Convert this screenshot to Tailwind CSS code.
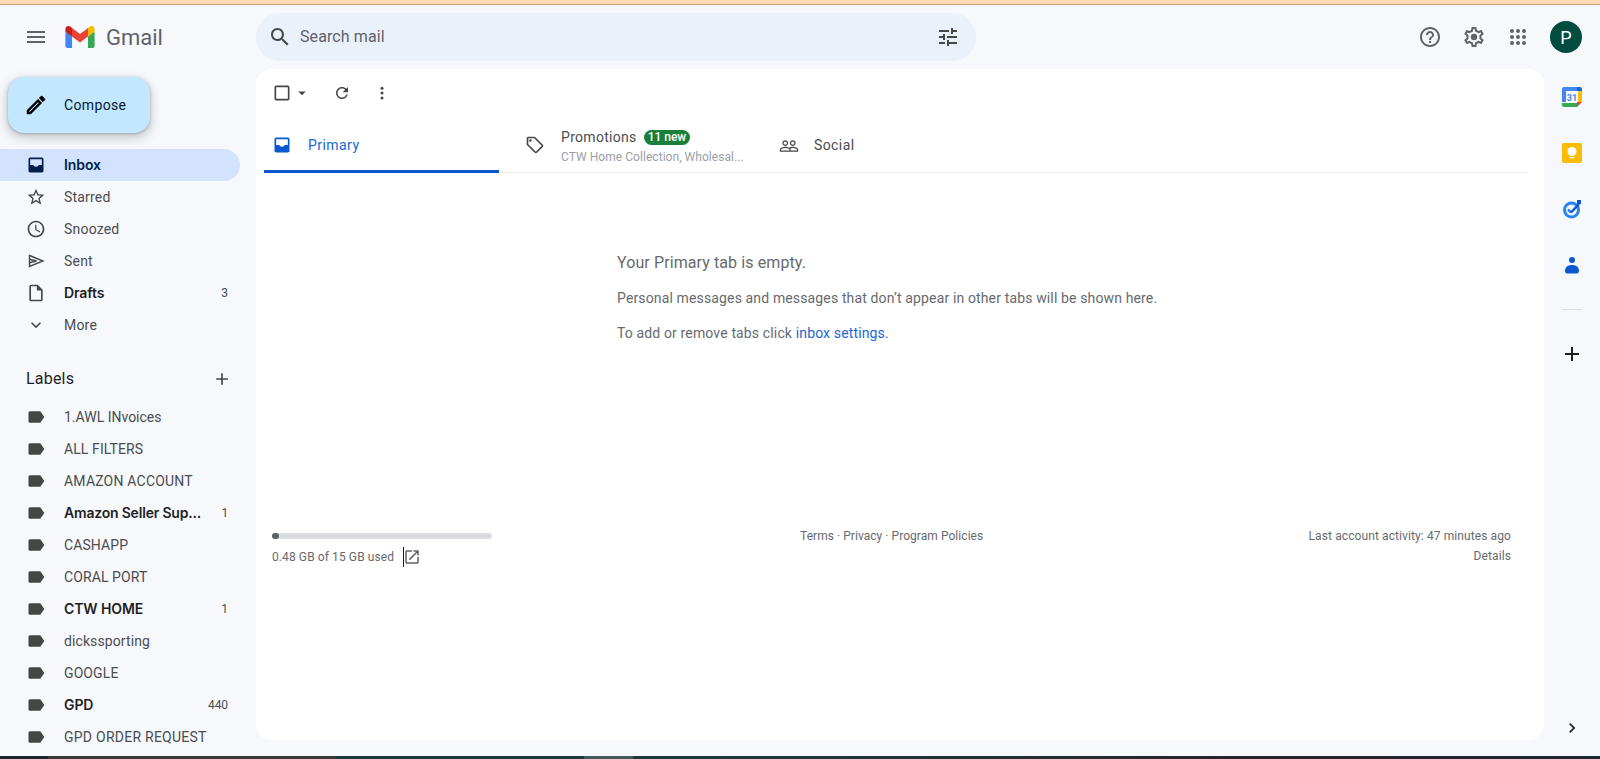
<!DOCTYPE html>
<html lang="en">
<head>
<meta charset="utf-8">
<title>Gmail</title>
<script src="https://cdn.jsdelivr.net/npm/@tailwindcss/browser@4"></script>
</head>
<body class="m-0 h-[759px] w-[1600px] overflow-hidden bg-[#f6f8fc] font-['Roboto',sans-serif] text-[14px] tracking-[0.1px] text-[#4a4d4f]">
<div class="flex h-[759px] flex-col">
  <div class="h-[5px] shrink-0 border-b border-[#c9a27c] bg-[#fdd9b5]"></div>

  <header class="flex h-[64px] shrink-0 items-center">
    <div class="flex w-[256px] shrink-0 items-center">
      <svg class="ml-[24px] h-6 w-6 fill-[#5f6368]" viewBox="0 0 24 24"><path d="M3 18h18v-2H3v2zm0-5h18v-2H3v2zm0-7v2h18V6H3z"/></svg>
      <svg class="ml-[17px] h-[22px] w-[30px]" viewBox="0 0 256 193"><path fill="#4285F4" d="M58.182 192.05V93.14L27.507 65.077 0 49.504v125.091c0 9.658 7.825 17.455 17.455 17.455h40.727z"/><path fill="#34A853" d="M197.818 192.05h40.727c9.659 0 17.455-7.826 17.455-17.455V49.505l-31.156 17.837-27.026 25.798v98.91z"/><path fill="#EA4335" d="M58.182 93.14l-4.174-38.647 4.174-36.989L128 69.868l69.818-52.364 4.669 34.992-4.669 40.644L128 145.504z"/><path fill="#FBBC04" d="M197.818 17.504V93.14L256 49.504V26.231c0-21.585-24.64-33.89-41.89-20.945l-16.292 12.218z"/><path fill="#C5221F" d="M0 49.504l26.759 20.07L58.182 93.14V17.504L41.89 5.286C24.61-7.66 0 4.646 0 26.23v23.273z"/></svg>
      <span class="ml-[11px] mt-[1px] text-[22px] leading-none tracking-normal text-[#5f6368]">Gmail</span>
    </div>
    <div class="flex h-[48px] w-[720px] items-center rounded-full bg-[#eaf1fb] pl-[12px] pr-[16px]">
      <svg class="h-6 w-6 fill-[#444746]" viewBox="0 0 24 24"><path d="M15.5 14h-.79l-.28-.27C15.41 12.59 16 11.11 16 9.5 16 5.91 13.09 3 9.5 3S3 5.91 3 9.5 5.91 16 9.5 16c1.61 0 3.09-.59 4.23-1.57l.27.28v.79l5 4.99L20.49 19l-4.99-5zm-6 0C7.01 14 5 11.99 5 9.5S7.01 5 9.5 5 14 7.01 14 9.5 11.99 14 9.5 14z"/></svg>
      <span class="ml-[8px] text-[16px] text-[#5f6368]">Search mail</span>
      <svg class="ml-auto h-6 w-6 fill-[#444746]" viewBox="0 0 24 24"><path d="M3 17v2h6v-2H3zM3 5v2h10V5H3zm10 16v-2h8v-2h-8v-2h-2v6h2zM7 9v2H3v2h4v2h2V9H7zm14 4v-2H11v2h10zm-6-4h2V7h4V5h-4V3h-2v6z"/></svg>
    </div>
    <div class="ml-auto flex items-center pr-[18px]">
      <svg class="h-6 w-6 fill-[#5f6368]" viewBox="0 0 24 24"><path d="M11 18h2v-2h-2v2zm1-16C6.48 2 2 6.48 2 12s4.48 10 10 10 10-4.48 10-10S17.52 2 12 2zm0 18c-4.41 0-8-3.59-8-8s3.59-8 8-8 8 3.59 8 8-3.59 8-8 8zm0-14c-2.21 0-4 1.79-4 4h2c0-1.1.9-2 2-2s2 .9 2 2c0 2-3 1.75-3 5h2c0-2.25 3-2.5 3-5 0-2.21-1.79-4-4-4z"/></svg>
      <svg class="ml-[20px] h-6 w-6 fill-[#5f6368]" viewBox="0 0 24 24"><path d="M19.43 12.98c.04-.32.07-.64.07-.98 0-.34-.03-.66-.07-.98l2.11-1.65c.19-.15.24-.42.12-.64l-2-3.46c-.09-.16-.26-.25-.44-.25-.06 0-.12.01-.17.03l-2.49 1c-.52-.4-1.08-.73-1.69-.98l-.38-2.65C14.46 2.18 14.25 2 14 2h-4c-.25 0-.46.18-.49.42l-.38 2.65c-.61.25-1.17.59-1.69.98l-2.49-1c-.06-.02-.12-.03-.18-.03-.17 0-.34.09-.43.25l-2 3.46c-.13.22-.07.49.12.64l2.11 1.65c-.04.32-.07.65-.07.98 0 .33.03.66.07.98l-2.11 1.65c-.19.15-.24.42-.12.64l2 3.46c.09.16.26.25.44.25.06 0 .12-.01.17-.03l2.49-1c.52.4 1.08.73 1.69.98l.38 2.65c.03.24.24.42.49.42h4c.25 0 .46-.18.49-.42l.38-2.65c.61-.25 1.17-.59 1.69-.98l2.49 1c.06.02.12.03.18.03.17 0 .34-.09.43-.25l2-3.46c.12-.22.07-.49-.12-.64l-2.11-1.65zm-1.98-1.71c.04.31.05.52.05.73 0 .21-.02.43-.05.73l-.14 1.13.89.7 1.08.84-.7 1.21-1.27-.51-1.04-.42-.9.68c-.43.32-.84.56-1.25.73l-1.06.43-.16 1.13-.2 1.35h-1.4l-.19-1.35-.16-1.13-1.06-.43c-.43-.18-.83-.41-1.23-.71l-.91-.7-1.06.43-1.27.51-.7-1.21 1.08-.84.89-.7-.14-1.13c-.03-.31-.05-.54-.05-.74s.02-.43.05-.73l.14-1.13-.89-.7-1.08-.84.7-1.21 1.27.51 1.04.42.9-.68c.43-.32.84-.56 1.25-.73l1.06-.43.16-1.13.2-1.35h1.39l.19 1.35.16 1.13 1.06.43c.43.18.83.41 1.23.71l.91.7 1.06-.43 1.27-.51.7 1.21-1.07.85-.89.7.14 1.13z"/><circle cx="12" cy="12" r="3.2"/></svg>
      <svg class="ml-[20px] h-6 w-6 fill-[#5f6368]" viewBox="0 0 24 24"><circle cx="6" cy="6" r="2"/><circle cx="12" cy="6" r="2"/><circle cx="18" cy="6" r="2"/><circle cx="6" cy="12" r="2"/><circle cx="12" cy="12" r="2"/><circle cx="18" cy="12" r="2"/><circle cx="6" cy="18" r="2"/><circle cx="12" cy="18" r="2"/><circle cx="18" cy="18" r="2"/></svg>
      <div class="ml-[20px] flex h-8 w-8 items-center justify-center rounded-full bg-[#004d40] text-[18px] text-white">P</div>
    </div>
  </header>

  <div class="flex min-h-0 flex-1">
    <aside class="w-[256px] shrink-0 overflow-hidden pt-[8px]">
      <div class="ml-[8px] flex h-[56px] w-[142px] items-center rounded-2xl bg-[#c2e7ff] pl-[16px] text-[#001d35] shadow-[0_1px_3px_rgba(60,64,67,0.35),0_4px_8px_3px_rgba(60,64,67,0.18)]">
        <svg class="h-6 w-6 fill-black stroke-black stroke-[0.5]" viewBox="0 0 24 24"><path d="M3 17.25V21h3.75L17.81 9.94l-3.75-3.75L3 17.25zM5.92 19H5v-.92l9.06-9.06.92.92L5.92 19zM20.71 5.63l-2.34-2.34c-.2-.2-.45-.29-.71-.29s-.51.1-.7.29l-1.83 1.83 3.75 3.75 1.83-1.83c.39-.39.39-1.02 0-1.41z"/></svg>
        <span class="ml-[16px] tracking-[0.35px]">Compose</span>
      </div>

      <nav class="mt-[16px] w-[240px]">
        <div class="flex h-8 items-center rounded-r-full bg-[#d3e3fd] pl-[26px] pr-[12px] font-['Inter'] font-semibold tracking-[-0.1px] text-[#041e49]">
          <svg class="h-5 w-5 fill-[#041e49]" viewBox="0 0 24 24"><path d="M19 3H5c-1.1 0-2 .9-2 2v14c0 1.1.9 2 2 2h14c1.1 0 2-.9 2-2V5c0-1.1-.9-2-2-2zm0 9h-4c0 1.66-1.34 2-3 2s-3-.34-3-2H5V5h14v7z"/></svg>
          <span class="ml-[18px] pb-[2px]">Inbox</span>
        </div>
        <div class="flex h-8 items-center pl-[26px] pr-[12px]">
          <svg class="h-5 w-5 fill-[#444746]" viewBox="0 0 24 24"><path d="M22 9.24l-7.19-.62L12 2 9.19 8.63 2 9.24l5.46 4.73L5.82 21 12 17.27 18.18 21l-1.63-7.03L22 9.24zM12 15.4l-3.76 2.27 1-4.28-3.32-2.88 4.38-.38L12 6.1l1.71 4.04 4.38.38-3.32 2.88 1 4.28L12 15.4z"/></svg>
          <span class="ml-[18px] tracking-[0.2px]">Starred</span>
        </div>
        <div class="flex h-8 items-center pl-[26px] pr-[12px]">
          <svg class="h-5 w-5 fill-[#444746]" viewBox="0 0 24 24"><path d="M11.99 2C6.47 2 2 6.48 2 12s4.47 10 9.99 10C17.52 22 22 17.52 22 12S17.52 2 11.99 2zM12 20c-4.42 0-8-3.58-8-8s3.58-8 8-8 8 3.58 8 8-3.58 8-8 8zm.5-13H11v6l5.25 3.15.75-1.23-4.5-2.67z"/></svg>
          <span class="ml-[18px] tracking-[0.2px]">Snoozed</span>
        </div>
        <div class="flex h-8 items-center pl-[26px] pr-[12px]">
          <svg class="h-5 w-5 fill-none stroke-[#444746] stroke-[1.4]" viewBox="0 0 20 20"><path d="M3.500 4.500L17 10 3.500 15.500z"/><path d="M3.500 8.300L10.500 10 3.500 11.700"/></svg>
          <span class="ml-[18px] tracking-[0.2px]">Sent</span>
        </div>
        <div class="flex h-8 items-center pl-[26px] pr-[12px] font-['Inter'] font-semibold tracking-[-0.1px] text-[#1f1f1f]">
          <svg class="h-5 w-5 fill-[#444746]" viewBox="0 0 24 24"><path d="M14 2H6c-1.1 0-1.99.9-1.99 2L4 20c0 1.1.89 2 1.99 2H18c1.1 0 2-.9 2-2V8l-6-6zM6 20V4h7v5h5v11H6z"/></svg>
          <span class="ml-[18px] pb-[2px]">Drafts</span>
          <span class="ml-auto font-['Roboto'] text-[12px] font-normal text-[#4a4d4f]">3</span>
        </div>
        <div class="flex h-8 items-center pl-[26px] pr-[12px]">
          <svg class="h-5 w-5 fill-[#444746]" viewBox="0 0 24 24"><path d="M7.41 8.59L12 13.17l4.59-4.58L18 10l-6 6-6-6 1.41-1.41z"/></svg>
          <span class="ml-[18px] tracking-[0.2px]">More</span>
        </div>

        <div class="mt-[22px] flex h-8 items-center pl-[26px] pr-[8px] text-[16px] text-[#1f1f1f]">
          <span class="tracking-[0.2px]">Labels</span>
          <svg class="ml-auto h-5 w-5 fill-[#444746]" viewBox="0 0 24 24"><path d="M19 13h-6v6h-2v-6H5v-2h6V5h2v6h6v2z"/></svg>
        </div>

        <div class="mt-[6px]">
          <div class="flex h-8 items-center pl-[26px] pr-[12px]">
            <svg class="h-5 w-5 fill-[#444746]" viewBox="0 0 24 24"><path d="M17.63 5.84C17.27 5.33 16.67 5 16 5L5 5.01C3.9 5.01 3 5.9 3 7v10c0 1.1.9 1.99 2 1.99L16 19c.67 0 1.27-.33 1.63-.84L22 12l-4.37-6.16z"/></svg>
            <span class="ml-[18px] tracking-normal">1.AWL INvoices</span>
          </div>
          <div class="flex h-8 items-center pl-[26px] pr-[12px]">
            <svg class="h-5 w-5 fill-[#444746]" viewBox="0 0 24 24"><path d="M17.63 5.84C17.27 5.33 16.67 5 16 5L5 5.01C3.9 5.01 3 5.9 3 7v10c0 1.1.9 1.99 2 1.99L16 19c.67 0 1.27-.33 1.63-.84L22 12l-4.37-6.16z"/></svg>
            <span class="ml-[18px]">ALL FILTERS</span>
          </div>
          <div class="flex h-8 items-center pl-[26px] pr-[12px]">
            <svg class="h-5 w-5 fill-[#444746]" viewBox="0 0 24 24"><path d="M17.63 5.84C17.27 5.33 16.67 5 16 5L5 5.01C3.9 5.01 3 5.9 3 7v10c0 1.1.9 1.99 2 1.99L16 19c.67 0 1.27-.33 1.63-.84L22 12l-4.37-6.16z"/></svg>
            <span class="ml-[18px] tracking-[0.2px]">AMAZON ACCOUNT</span>
          </div>
          <div class="flex h-8 items-center pl-[26px] pr-[12px] font-['Inter'] font-semibold tracking-[-0.2px] text-[#1f1f1f]">
            <svg class="h-5 w-5 fill-[#444746]" viewBox="0 0 24 24"><path d="M17.63 5.84C17.27 5.33 16.67 5 16 5L5 5.01C3.9 5.01 3 5.9 3 7v10c0 1.1.9 1.99 2 1.99L16 19c.67 0 1.27-.33 1.63-.84L22 12l-4.37-6.16z"/></svg>
            <span class="ml-[18px] pb-[2px]">Amazon Seller Sup...</span>
            <span class="ml-auto font-['Roboto'] text-[12px] font-normal text-[#4a4d4f]">1</span>
          </div>
          <div class="flex h-8 items-center pl-[26px] pr-[12px]">
            <svg class="h-5 w-5 fill-[#444746]" viewBox="0 0 24 24"><path d="M17.63 5.84C17.27 5.33 16.67 5 16 5L5 5.01C3.9 5.01 3 5.9 3 7v10c0 1.1.9 1.99 2 1.99L16 19c.67 0 1.27-.33 1.63-.84L22 12l-4.37-6.16z"/></svg>
            <span class="ml-[18px]">CASHAPP</span>
          </div>
          <div class="flex h-8 items-center pl-[26px] pr-[12px]">
            <svg class="h-5 w-5 fill-[#444746]" viewBox="0 0 24 24"><path d="M17.63 5.84C17.27 5.33 16.67 5 16 5L5 5.01C3.9 5.01 3 5.9 3 7v10c0 1.1.9 1.99 2 1.99L16 19c.67 0 1.27-.33 1.63-.84L22 12l-4.37-6.16z"/></svg>
            <span class="ml-[18px]">CORAL PORT</span>
          </div>
          <div class="flex h-8 items-center pl-[26px] pr-[12px] font-['Inter'] font-semibold tracking-[-0.1px] text-[#1f1f1f]">
            <svg class="h-5 w-5 fill-[#444746]" viewBox="0 0 24 24"><path d="M17.63 5.84C17.27 5.33 16.67 5 16 5L5 5.01C3.9 5.01 3 5.9 3 7v10c0 1.1.9 1.99 2 1.99L16 19c.67 0 1.27-.33 1.63-.84L22 12l-4.37-6.16z"/></svg>
            <span class="ml-[18px] pb-[2px]">CTW HOME</span>
            <span class="ml-auto font-['Roboto'] text-[12px] font-normal text-[#4a4d4f]">1</span>
          </div>
          <div class="flex h-8 items-center pl-[26px] pr-[12px]">
            <svg class="h-5 w-5 fill-[#444746]" viewBox="0 0 24 24"><path d="M17.63 5.84C17.27 5.33 16.67 5 16 5L5 5.01C3.9 5.01 3 5.9 3 7v10c0 1.1.9 1.99 2 1.99L16 19c.67 0 1.27-.33 1.63-.84L22 12l-4.37-6.16z"/></svg>
            <span class="ml-[18px]">dickssporting</span>
          </div>
          <div class="flex h-8 items-center pl-[26px] pr-[12px]">
            <svg class="h-5 w-5 fill-[#444746]" viewBox="0 0 24 24"><path d="M17.63 5.84C17.27 5.33 16.67 5 16 5L5 5.01C3.9 5.01 3 5.9 3 7v10c0 1.1.9 1.99 2 1.99L16 19c.67 0 1.27-.33 1.63-.84L22 12l-4.37-6.16z"/></svg>
            <span class="ml-[18px]">GOOGLE</span>
          </div>
          <div class="flex h-8 items-center pl-[26px] pr-[12px] font-['Inter'] font-semibold tracking-[-0.1px] text-[#1f1f1f]">
            <svg class="h-5 w-5 fill-[#444746]" viewBox="0 0 24 24"><path d="M17.63 5.84C17.27 5.33 16.67 5 16 5L5 5.01C3.9 5.01 3 5.9 3 7v10c0 1.1.9 1.99 2 1.99L16 19c.67 0 1.27-.33 1.63-.84L22 12l-4.37-6.16z"/></svg>
            <span class="ml-[18px] pb-[2px]">GPD</span>
            <span class="ml-auto font-['Roboto'] text-[12px] font-normal text-[#4a4d4f]">440</span>
          </div>
          <div class="flex h-8 items-center pl-[26px] pr-[12px]">
            <svg class="h-5 w-5 fill-[#444746]" viewBox="0 0 24 24"><path d="M17.63 5.84C17.27 5.33 16.67 5 16 5L5 5.01C3.9 5.01 3 5.9 3 7v10c0 1.1.9 1.99 2 1.99L16 19c.67 0 1.27-.33 1.63-.84L22 12l-4.37-6.16z"/></svg>
            <span class="ml-[18px] tracking-[0.25px]">GPD ORDER REQUEST</span>
          </div>
        </div>
      </nav>
    </aside>

    <main class="mb-[16px] min-w-0 flex-1 rounded-2xl bg-white">
      <div class="flex h-[48px] items-center pl-[16px]">
        <svg class="h-5 w-5 fill-[#444746]" viewBox="0 0 24 24"><path d="M19 5v14H5V5h14m0-2H5c-1.1 0-2 .9-2 2v14c0 1.1.9 2 2 2h14c1.1 0 2-.9 2-2V5c0-1.1-.9-2-2-2z"/></svg>
        <svg class="ml-[1px] h-[18px] w-[18px] fill-[#444746]" viewBox="0 0 24 24"><path d="M7 10l5 5 5-5z"/></svg>
        <svg class="ml-[22px] h-[18px] w-[18px] fill-[#444746]" viewBox="0 0 24 24"><path d="M17.65 6.35C16.2 4.9 14.21 4 12 4c-4.42 0-7.99 3.58-7.99 8s3.57 8 7.99 8c3.73 0 6.84-2.55 7.73-6h-2.08c-.82 2.33-3.04 4-5.65 4-3.31 0-6-2.69-6-6s2.69-6 6-6c1.66 0 3.14.69 4.22 1.78L13 11h7V4l-2.35 2.35z"/></svg>
        <svg class="ml-[22px] h-[18px] w-[18px] fill-[#444746]" viewBox="0 0 24 24"><circle cx="12" cy="5.5" r="2"/><circle cx="12" cy="12" r="2"/><circle cx="12" cy="18.5" r="2"/></svg>
      </div>

      <div class="ml-[8px] mr-[16px] flex h-[56px] border-b border-[#f0f1f2]">
        <div class="flex h-[56px] w-[235px] items-center border-b-[3px] border-[#0b57d0] pl-[8px] pt-[3px] text-[#1a66d8]">
          <svg class="h-5 w-5 fill-[#0b57d0]" viewBox="0 0 24 24"><path d="M19 3H5c-1.1 0-2 .9-2 2v14c0 1.1.9 2 2 2h14c1.1 0 2-.9 2-2V5c0-1.1-.9-2-2-2zm0 9h-4c0 1.66-1.34 2-3 2s-3-.34-3-2H5V5h14v7z"/></svg>
          <span class="ml-[16px] tracking-[0.45px]">Primary</span>
        </div>
        <div class="flex w-[254px] items-center pl-[26px]">
          <svg class="h-5 w-5 fill-[#444746]" viewBox="0 0 24 24"><path d="M21.41 11.58l-9-9C12.05 2.22 11.55 2 11 2H4c-1.1 0-2 .9-2 2v7c0 .55.22 1.05.59 1.42l9 9c.36.36.86.58 1.41.58s1.05-.22 1.41-.59l7-7c.37-.36.59-.86.59-1.41s-.23-1.06-.59-1.42zM13 20.01L4 11V4h7v-.01l9 9-7 7.02z"/><circle cx="6.5" cy="6.5" r="1.5"/></svg>
          <div class="ml-[16px] pt-[3px]">
            <div class="flex h-[18px] items-center">
              <span class="tracking-[0.3px]">Promotions</span>
              <span class="ml-[7px] rounded-full bg-[#188038] px-[4px] text-[12px] font-medium leading-[15px] tracking-normal text-white">11 new</span>
            </div>
            <div class="mt-[4px] text-[12px] leading-[14px] tracking-[0.05px] text-[#9aa0a6]">CTW Home Collection, Wholesal...</div>
          </div>
        </div>
        <div class="flex items-center pl-[26px] pt-[2px]">
          <svg class="h-5 w-5 fill-[#444746]" viewBox="0 0 24 24"><path d="M16.5 13c-1.2 0-3.07.34-4.5 1-1.43-.67-3.3-1-4.5-1C5.33 13 1 14.08 1 16.25V19h22v-2.75c0-2.17-4.33-3.25-6.5-3.25zm-4 4.5h-10v-1.25c0-.54 2.56-1.75 5-1.75s5 1.21 5 1.75v1.25zm9 0H14v-1.25c0-.46-.2-.86-.52-1.22.88-.3 1.96-.53 3.02-.53 2.44 0 5 1.21 5 1.75v1.25zM7.5 12c1.93 0 3.5-1.57 3.5-3.5S9.43 5 7.5 5 4 6.57 4 8.5 5.57 12 7.5 12zm0-5.5c1.1 0 2 .9 2 2s-.9 2-2 2-2-.9-2-2 .9-2 2-2zm9 5.500c1.93 0 3.5-1.57 3.5-3.5S18.43 5 16.5 5 13 6.57 13 8.5s1.57 3.5 3.5 3.5zm0-5.5c1.1 0 2 .9 2 2s-.9 2-2 2-2-.9-2-2 .9-2 2-2z"/></svg>
          <span class="ml-[15px] tracking-[0.4px]">Social</span>
        </div>
      </div>

      <div class="ml-[361px] mt-[78px] text-[#666a6e]">
        <div class="text-[16px] leading-[24px] tracking-[0.1px]">Your Primary tab is empty.</div>
        <div class="mt-[13px] leading-[20px] tracking-[0.14px]">Personal messages and messages that don’t appear in other tabs will be shown here.</div>
        <div class="mt-[15px] leading-[20px] tracking-[0.14px]">To add or remove tabs click <span class="text-[#1a66d8]">inbox settings.</span></div>
      </div>

      <div class="mt-[183px] flex pl-[16px] pr-[33px] text-[12px] leading-[20px] text-[#666a6e]">
        <div class="w-[528px]">
          <div class="mt-[7px] h-[6px] w-[220px] rounded-full bg-[#dadce0]">
            <div class="h-[6px] w-[7px] rounded-full bg-[#5f6368]"></div>
          </div>
          <div class="mt-[8px] flex items-center">
            <span class="tracking-[0.1px]">0.48 GB of 15 GB used</span>
            <span class="ml-[9px] h-[20px] w-px bg-[#0000ff]"></span>
            <svg class="-ml-[1px] h-[18px] w-[18px] fill-[#5f6368]" viewBox="0 0 24 24"><path d="M19 19H5V5h7V3H5c-1.11 0-2 .9-2 2v14c0 1.1.89 2 2 2h14c1.1 0 2-.9 2-2v-7h-2v7zM14 3v2h3.590l-9.830 9.830 1.410 1.410L19 6.410V10h2V3h-7z"/></svg>
          </div>
        </div>
        <div class="tracking-[0.05px]">Terms · Privacy · Program Policies</div>
        <div class="ml-auto text-right">
          <div class="tracking-[0.1px]">Last account activity: 47 minutes ago</div>
          <div>Details</div>
        </div>
      </div>
    </main>

    <aside class="mb-[18px] flex w-[56px] shrink-0 flex-col items-center pt-[18px]">
      <svg class="h-5 w-5" viewBox="0 0 20 20"><path fill="#fff" d="M4 4h12v12H4z"/><path fill="#4285f4" d="M15 0H2C.9 0 0 .9 0 2v13h4V4h11z"/><path fill="#1967d2" d="M15 0v4h5V2c0-1.100-.9-2-2-2z"/><path fill="#fbbc04" d="M16 4h4v11h-4z"/><path fill="#34a853" d="M0 15v3c0 1.100.9 2 2 2h13v-4H0z"/><path fill="#ea4335" d="M15 20l5-5h-5z"/><path fill="#188038" d="M15 15h1v1h-1z"/><text x="10" y="14" text-anchor="middle" font-family="Roboto" font-size="9" font-weight="700" fill="#4285f4">31</text></svg>
      <div class="mt-[36px] flex h-5 w-5 items-center justify-center rounded-[2px] bg-[#fbbc04]">
        <svg class="h-[14px] w-[14px] fill-white" viewBox="0 0 14 14"><circle cx="7" cy="5.500" r="4.500"/><path d="M4.700 11h4.600v1.300H4.700z"/></svg>
      </div>
      <svg class="mt-[36px] h-5 w-5" viewBox="0 0 20 20"><circle cx="9.500" cy="11" r="7" fill="none" stroke="#2684fc" stroke-width="3"/><path fill="none" stroke="#2684fc" stroke-width="2.500" d="M6 10.500l3 3"/><path fill="none" stroke="#0b57d0" stroke-width="2.500" d="M9 13.500l8-8.500"/><path fill="#0b57d0" d="M15 1h4v4h-4z"/></svg>
      <svg class="mt-[36px] h-5 w-5 fill-[#0b57d0]" viewBox="0 0 20 20"><circle cx="10" cy="5" r="3"/><path d="M3 16c0-4 3-6 7-6s7 2 7 6c0 1.500-1 2.500-2 2.500H5c-1 0-2-1-2-2.500z"/></svg>
      <div class="mt-[34px] h-px w-5 bg-[#dadce0]"></div>
      <svg class="mt-[32px] h-6 w-6 fill-[#1f1f1f]" viewBox="0 0 24 24"><path d="M19 13h-6v6h-2v-6H5v-2h6V5h2v6h6v2z"/></svg>
      <svg class="mt-auto h-5 w-5 fill-[#1f1f1f]" viewBox="0 0 24 24"><path d="M8.590 16.590L13.170 12 8.590 7.410 10 6l6 6-6 6z"/></svg>
    </aside>
  </div>

  <div class="flex h-[3px] shrink-0 bg-[#1d3238]">
    <div class="w-[48px] bg-[#1b2433]"></div>
    <div class="w-[288px] bg-[#3a3a3a]"></div>
    <div class="w-[248px] bg-[#1d3a40]"></div>
    <div class="w-[49px] bg-[#46595f]"></div>
    <div class="flex-1 bg-[linear-gradient(to_right,#1d3a40,#1e3238_35%,#2a2230_65%,#1a2a35)]"></div>
  </div>
</div>
</body>
</html>
